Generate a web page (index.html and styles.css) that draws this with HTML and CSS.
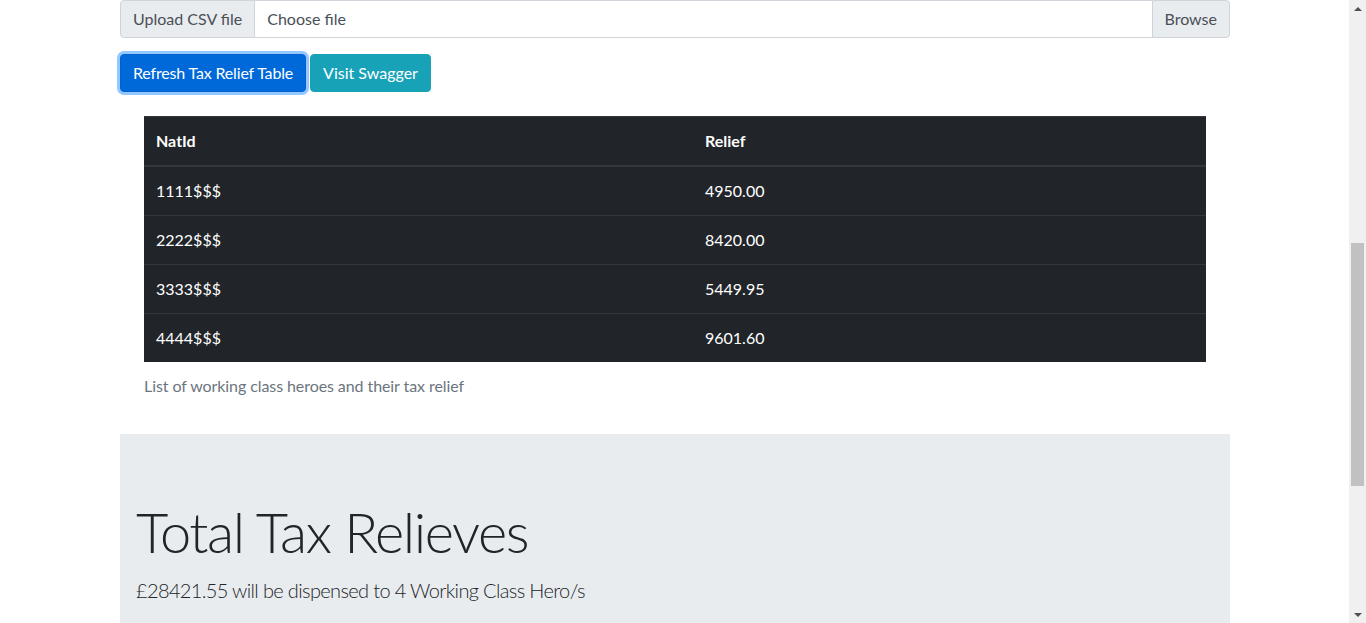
FILE: index.html
```html
<!DOCTYPE html>
<html lang="en">
<head>
<meta charset="utf-8">
<title>Tax Relief</title>
<link rel="stylesheet" href="styles.css">
</head>
<body>
<div class="page">
  <main class="main">
    <div class="container">
      <div class="input-group">
        <span class="input-prepend">Upload CSV file</span>
        <label class="file-label">Choose file</label>
        <span class="file-browse">Browse</span>
      </div>
      <div class="actions">
        <button class="btn btn-primary" type="button">Refresh Tax Relief Table</button>
        <button class="btn btn-info" type="button">Visit Swagger</button>
      </div>
      <div class="table-wrap">
        <table class="table">
          <caption>List of working class heroes and their tax relief</caption>
          <thead>
            <tr><th class="col-id">NatId</th><th>Relief</th></tr>
          </thead>
          <tbody>
            <tr><td>1111$$$</td><td>4950.00</td></tr>
            <tr><td>2222$$$</td><td>8420.00</td></tr>
            <tr><td>3333$$$</td><td>5449.95</td></tr>
            <tr><td>4444$$$</td><td>9601.60</td></tr>
          </tbody>
        </table>
      </div>
      <section class="jumbotron">
        <h1 class="display">Total Tax Relieves</h1>
        <p class="lead">£28421.55 will be dispensed to 4 Working Class Hero/s</p>
      </section>
    </div>
  </main>
  <div class="scrollbar">
    <span class="arrow arrow-up"></span>
    <div class="track"><div class="thumb"></div></div>
    <span class="arrow arrow-down"></span>
  </div>
</div>
</body>
</html>
```
FILE: styles.css
```css
* { box-sizing: border-box; }
html, body { margin: 0; padding: 0; height: 623px; overflow: hidden; background: #fff; }
body {
  font-family: "Lato", "Open Sans", sans-serif;
  font-size: 16px;
  line-height: 1.5;
  color: #212529;
}
.page { display: flex; height: 623px; }
.main { flex: 1; overflow: hidden; padding-left: 120px; }
.container { width: 1110px; }

.input-group {
  display: flex;
  height: 38px;
  color: #495057;
}
.input-prepend {
  display: flex; align-items: center;
  padding: 0 12px;
  background: #e9ecef;
  border: 1px solid #ced4da;
  border-radius: 4px 0 0 4px;
  white-space: nowrap;
}
.file-label {
  flex: 1;
  display: flex; align-items: center;
  padding: 0 12px;
  border: 1px solid #ced4da;
  border-left: 0;
  border-right: 0;
  background: #fff;
}
.file-browse {
  display: flex; align-items: center;
  padding: 0 12px;
  background: #e9ecef;
  border: 1px solid #ced4da;
  border-radius: 0 4px 4px 0;
}

.actions { display: flex; gap: 4px; margin-top: 16px; }
.btn {
  font: inherit;
  height: 38px;
  padding: 0 12px;
  border: 1px solid transparent;
  border-radius: 4px;
  color: #fff;
  cursor: pointer;
}
.btn-primary {
  background: #0069d9;
  border-color: #0062cc;
  box-shadow: 0 0 0 3px rgba(38, 143, 255, 0.5);
  letter-spacing: -0.17px;
}
.btn-info { background: #17a2b8; border-color: #17a2b8; }

.table-wrap { padding: 24px 24px 0; }
.table {
  width: 100%;
  border-collapse: collapse;
  background: #212529;
  color: #fff;
}
.table caption {
  caption-side: bottom;
  text-align: left;
  color: #6c757d;
  padding: 12px 0;
  background: #fff;
  letter-spacing: -0.08px;
}
.table th, .table td {
  padding: 12px;
  text-align: left;
  vertical-align: top;
  border-top: 1px solid #32383e;
}
.table th { font-weight: 700; }
.table thead th { border-bottom: 2px solid #32383e; vertical-align: bottom; }
.col-id { width: 549px; }

.jumbotron {
  margin-top: 24px;
  background: #e9ecef;
  padding: 64px 16px;
}
.display {
  margin: 0 0 10px;
  font-size: 56px;
  font-weight: 300;
  line-height: 1.2;
  letter-spacing: -1.45px;
}
.lead {
  margin: 0;
  font-size: 20px;
  font-weight: 300;
  letter-spacing: -0.64px;
}

.scrollbar {
  width: 17px;
  background: #f0f0f0;
  display: flex;
  flex-direction: column;
  align-items: center;
}
.arrow { width: 0; height: 0; border-left: 4px solid transparent; border-right: 4px solid transparent; }
.arrow-up { border-bottom: 4px solid #505050; margin-top: 7px; }
.arrow-down { border-top: 4px solid #505050; margin-bottom: 6px; }
.track { flex: 1; width: 100%; padding: 0 2px; }
.thumb { margin-top: 232px; height: 243px; background: #c1c1c1; }
```
